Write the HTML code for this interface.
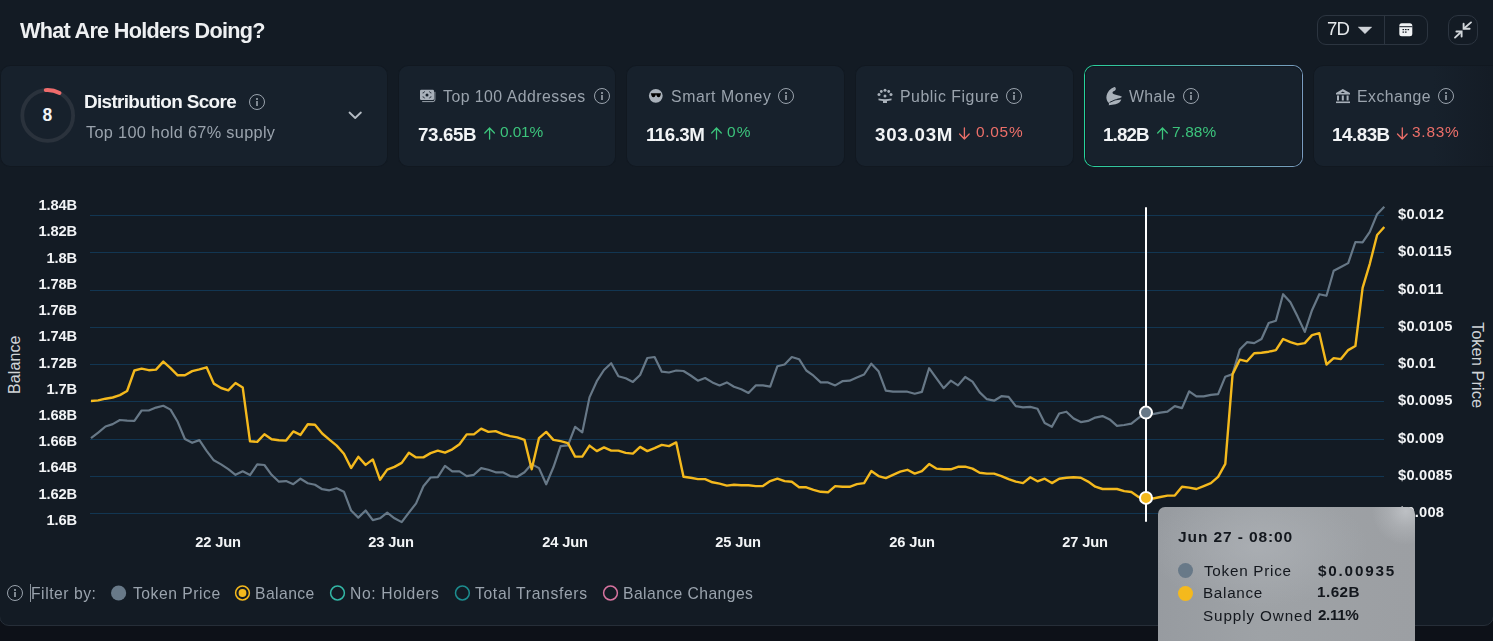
<!DOCTYPE html>
<html><head><meta charset="utf-8">
<style>
*{box-sizing:border-box;margin:0;padding:0}
html,body{width:1493px;height:641px;overflow:hidden;background:#0d1118;font-family:"Liberation Sans",sans-serif}
#wrap{position:absolute;left:-1px;top:-20px;width:1495px;height:646px;background:#131b24;border:1px solid #262e38;border-radius:10px}
.abs{position:absolute}
.tx{position:absolute;white-space:nowrap;line-height:normal;will-change:transform}
.card{position:absolute;top:65px;height:102px;background:#17212c;border-radius:10px;box-shadow:inset 0 0 0 1px #111820}
.info{position:absolute;width:16px;height:16px;border:1.2px solid #9aa3ad;border-radius:50%}
.info:before{content:"";position:absolute;left:6.4px;top:3.2px;width:1.2px;height:1.4px;background:#7f8891}
.info:after{content:"";position:absolute;left:6.4px;top:5.9px;width:1.2px;height:5.2px;background:#7f8891}
.rad{position:absolute;top:585.5px;width:15px;height:15px;border-radius:50%}
.tt{position:absolute;z-index:5;left:1158px;top:507px;width:257px;height:150px;border-radius:7px;background:radial-gradient(circle 34px at 248px 4px,rgba(200,203,207,0.75),rgba(200,203,207,0.3) 50%,rgba(200,203,207,0)),radial-gradient(ellipse 110px 60px at 100px 40px,rgba(172,176,181,0.8),rgba(172,176,181,0)),linear-gradient(90deg,#979ba0,#9ea2a6 40%,#9c9fa3)}
</style></head><body>
<div id="wrap"></div>

<!-- top controls -->
<div class="abs" style="left:1317px;top:15px;width:111px;height:30px;border:1px solid #2c3540;border-radius:9px"></div>
<div class="abs" style="left:1384px;top:15px;width:1px;height:30px;background:#2c3540"></div>
<svg class="abs" style="left:1357px;top:25px" width="16" height="10"><path d="M1.2 2 L14.8 2 L8 8.8 Z" fill="#cfd3d8" stroke="#cfd3d8" stroke-width="0.4" stroke-linejoin="round"/></svg>
<svg class="abs" style="left:1398px;top:22px" width="15" height="15"><rect x="1.3" y="1.3" width="13" height="13" rx="2.5" fill="#f0f2f4"/><rect x="1.3" y="4.2" width="13" height="1" fill="#131a23"/><g fill="#131a23"><rect x="4.5" y="7" width="1.6" height="1.2"/><rect x="7" y="7" width="1.6" height="1.2"/><rect x="9.5" y="7" width="1.6" height="1.2"/><rect x="4.5" y="9.5" width="1.6" height="1.2"/><rect x="7" y="9.5" width="1.6" height="1.2"/></g></svg>
<div class="abs" style="left:1448px;top:15px;width:30px;height:30px;border:1px solid #2c3540;border-radius:10px"></div>
<svg class="abs" style="left:1448px;top:15px" width="30" height="30"><g stroke="#d2d6da" stroke-width="1.9" fill="none" stroke-linecap="round"><path d="M23 7.4 L16.2 13.2"/><path d="M15.6 8.7 V13.7 H21.6"/><path d="M7 22.6 L13 17"/><path d="M8.4 16.5 H13.6 V21.6"/></g></svg>

<!-- card 1 -->
<div class="card" style="left:0;width:388px"></div>
<svg class="abs" style="left:20px;top:88px" width="56" height="56"><circle cx="27.7" cy="27.4" r="25.4" fill="none" stroke="#2a323c" stroke-width="3.8"/><path d="M 25.7 2.05 A 25.4 25.4 0 0 1 39.5 5" fill="none" stroke="#ef6b6b" stroke-width="3.8" stroke-linecap="round"/><text x="27.4" y="33.4" text-anchor="middle" font-family="Liberation Sans" font-weight="bold" font-size="17.5" fill="#f2f4f6">8</text></svg>
<div class="info" style="left:249px;top:94px"></div>
<svg class="abs" style="left:348px;top:111px" width="15" height="9"><path d="M1.5 1.5 L7.2 7 L12.9 1.5" stroke="#b5bcc4" stroke-width="1.8" fill="none" stroke-linecap="round" stroke-linejoin="round"/></svg>

<!-- card 2 -->
<div class="card" style="left:398px;width:218px"></div>
<svg class="abs" style="left:419px;top:88px" width="18" height="16"><rect x="1" y="1.8" width="14" height="10.2" rx="1.3" fill="#a9b1ba"/><g stroke="#17212c" stroke-width="0.9" fill="none" stroke-linecap="round"><path d="M5.5 3.8 Q5.3 4.9 4 5"/><path d="M10.5 3.8 Q10.7 4.9 12 5"/><path d="M4 8.8 Q5.3 8.9 5.5 10"/><path d="M12 8.8 Q10.7 8.9 10.5 10"/></g><circle cx="8" cy="6.9" r="1.5" fill="#17212c"/><path d="M15.9 3.8 V11.8 Q15.9 13.6 14.1 13.6 H3.2" stroke="#a9b1ba" stroke-width="0.9" fill="none"/></svg>
<div class="info" style="left:594px;top:88px"></div>

<!-- card 3 -->
<div class="card" style="left:626px;width:219px"></div>
<svg class="abs" style="left:648px;top:88px" width="16" height="16"><circle cx="7.8" cy="7.8" r="6.9" fill="#a9b1ba"/><path d="M2.8 5.2 H13 L12.3 8 Q11.8 9.2 10.4 9.2 Q9 9.2 8.5 7.6 L8 6.2 L7.5 7.6 Q7 9.2 5.6 9.2 Q4.2 9.2 3.6 8 Z" fill="#000"/></svg>
<div class="info" style="left:778px;top:88px"></div>

<!-- card 4 -->
<div class="card" style="left:855px;width:219px"></div>
<svg class="abs" style="left:876px;top:87px" width="18" height="18"><g fill="#a9b1ba"><circle cx="9" cy="3.2" r="1.5"/><circle cx="5.3" cy="4.5" r="1.4"/><circle cx="12.7" cy="4.5" r="1.4"/><circle cx="3" cy="7.6" r="1.5"/><circle cx="15" cy="7.6" r="1.5"/><circle cx="9" cy="9" r="1.5"/><path d="M2.5 11.5 Q9 13 15.5 11.5 L15.5 13.2 Q12.5 14 11 14 V16 H7 V14 Q5.5 14 2.5 13.2 Z"/></g></svg>
<div class="info" style="left:1006px;top:88px"></div>

<!-- card 5 -->
<div class="card" style="left:1084px;width:219px;border:1px solid transparent;background:linear-gradient(#17212c,#17212c) padding-box,linear-gradient(90deg,#27d49c,#3fb6a0 30%,#7a9cc0) border-box"></div>
<svg class="abs" style="left:1105px;top:86px" width="18" height="20"><path d="M9.4 1 C10.6 1.2 11.1 2.5 10.7 3.6 C10.3 4.6 9.2 5.2 8 5.6 L7.4 7 C8.5 8.6 11 8.8 13.5 9.4 C15.5 9.9 16.8 10.2 16.9 10.8 C16.5 11.9 14 12.4 11.5 12.6 C13.5 12.8 16 13 16.3 13.4 C15.8 15.5 13.5 17.5 10.5 18.2 C8.5 18.7 6 18.9 3.6 19.2 C4.2 18.2 4.2 17.5 3.6 16.8 C1.6 14.8 1 12 1.6 9.5 C2.3 6 5 2.8 9.4 1 Z" fill="#a9b1ba"/><path d="M4.6 16.4 Q9.5 13.2 16.6 12.9" stroke="#17212c" stroke-width="1" fill="none"/><path d="M7.8 4 Q9 3.2 9.6 2" stroke="#8d959e" stroke-width="0.6" fill="none"/></svg>
<div class="info" style="left:1183px;top:88px"></div>

<!-- card 6 -->
<div class="card" style="left:1313px;width:219px;background:linear-gradient(90deg,#17212c 0,#17212c 120px,#131a23 200px)"></div>
<svg class="abs" style="left:1335px;top:88px" width="16" height="16"><g fill="#a9b1ba"><path d="M7.8 1 L15 5 V6.4 H1 V5 Z"/><rect x="2" y="7.5" width="2" height="5"/><rect x="6.8" y="7.5" width="2" height="5"/><rect x="11.6" y="7.5" width="2" height="5"/><rect x="1" y="13.5" width="14" height="1.6"/></g><path d="M5.6 4.9 L7.8 3.6 L10 4.9 Z" fill="#17212c"/></svg>
<div class="info" style="left:1438px;top:88px"></div>

<!-- arrows -->
<svg class="abs" style="left:0;top:0" width="1493" height="160"><g stroke-width="1.3" fill="none" stroke-linecap="round" stroke-linejoin="round">
<path d="M489.6 139 V128 M484.8 133 L489.6 128 L494.4 133" stroke="#3cc47c"/>
<path d="M716.5 139 V128 M711.7 133 L716.5 128 L721.3 133" stroke="#3cc47c"/>
<path d="M964.4 128 V139 M959.6 134 L964.4 139 L969.2 134" stroke="#ec6f69"/>
<path d="M1162.5 139 V128 M1157.7 133 L1162.5 128 L1167.3 133" stroke="#3cc47c"/>
<path d="M1402.3 128 V139 M1397.5 134 L1402.3 139 L1407.1 134" stroke="#ec6f69"/>
</g></svg>

<!-- chart -->
<svg class="abs" style="left:0;top:0" width="1493" height="641">
<g stroke="#123652" stroke-width="1"><line x1="90" y1="215.5" x2="1384" y2="215.5"/><line x1="90" y1="252.5" x2="1384" y2="252.5"/><line x1="90" y1="290.5" x2="1384" y2="290.5"/><line x1="90" y1="327.5" x2="1384" y2="327.5"/><line x1="90" y1="364.5" x2="1384" y2="364.5"/><line x1="90" y1="401.5" x2="1384" y2="401.5"/><line x1="90" y1="439.5" x2="1384" y2="439.5"/><line x1="90" y1="476.5" x2="1384" y2="476.5"/><line x1="90" y1="513.5" x2="1384" y2="513.5"/></g>
<text x="19.8" y="364.7" transform="rotate(-90 19.8 364.7)" text-anchor="middle" style="font-size:16px;letter-spacing:0.1px;font-family:'Liberation Sans';fill:#d0d4d8">Balance</text>
<text x="1471.6" y="365" transform="rotate(90 1471.6 365)" text-anchor="middle" style="font-size:16.5px;letter-spacing:0px;font-family:'Liberation Sans';fill:#d0d4d8">Token Price</text>
<polyline points="91.0,438.1 98.2,432.7 105.5,426.5 112.7,424.1 119.9,420.0 127.1,420.6 134.4,420.9 141.6,410.5 148.8,410.5 156.0,407.6 163.3,405.8 170.5,409.6 177.7,421.8 184.9,439.0 192.2,442.8 199.4,440.1 206.6,450.8 213.8,460.3 221.1,464.4 228.3,469.2 235.5,474.8 242.7,471.3 250.0,475.1 257.2,464.4 264.4,465.0 271.6,474.8 278.9,481.7 286.1,481.1 293.3,484.2 300.5,478.7 307.8,483.2 315.0,484.8 322.2,489.2 329.4,490.3 336.7,488.2 343.9,491.7 351.1,510.5 358.3,517.6 365.6,510.5 372.8,520.1 380.0,518.3 387.2,512.6 394.5,518.3 401.7,522.1 408.9,512.6 416.1,503.4 423.4,486.2 430.6,477.5 437.8,477.1 445.0,465.9 452.3,471.4 459.5,471.4 466.7,476.1 473.9,474.8 481.2,468.1 488.4,469.8 495.6,472.3 502.8,472.3 510.1,476.1 517.3,476.8 524.5,472.3 531.7,464.1 539.0,468.1 546.2,484.3 553.4,467.3 560.6,446.1 567.9,445.4 575.1,426.9 582.3,432.4 589.5,397.4 596.8,381.2 604.0,370.0 611.2,363.2 618.4,376.2 625.7,378.2 632.9,381.9 640.1,375.0 647.3,358.0 654.6,357.0 661.8,371.7 669.0,372.5 676.2,370.5 683.5,371.0 690.7,375.5 697.9,380.7 705.1,378.0 712.4,382.4 719.6,385.4 726.8,382.4 734.0,386.7 741.3,389.2 748.5,392.9 755.7,385.4 762.9,385.4 770.2,386.7 777.4,366.2 784.6,364.5 791.8,357.0 799.1,359.2 806.3,370.5 813.5,375.7 820.7,382.4 828.0,382.4 835.2,385.4 842.4,381.2 849.6,380.7 856.9,377.5 864.1,374.5 871.3,363.7 878.5,371.2 885.8,390.7 893.0,391.7 900.2,391.7 907.4,391.7 914.7,393.7 921.9,391.9 929.1,368.2 936.3,378.2 943.6,388.2 950.8,380.7 958.0,385.4 965.2,377.0 972.5,381.7 979.7,392.4 986.9,399.2 994.1,400.7 1001.4,396.2 1008.6,396.9 1015.8,406.2 1023.0,407.4 1030.3,406.9 1037.5,408.7 1044.7,423.0 1051.9,426.8 1059.2,413.5 1066.4,411.7 1073.6,418.5 1080.8,422.1 1088.1,420.9 1095.3,417.6 1102.5,416.1 1109.7,419.4 1117.0,425.9 1124.2,425.0 1131.4,423.6 1138.6,417.9 1145.9,412.6 1153.1,414.1 1160.3,412.6 1167.5,411.7 1174.8,406.1 1182.0,408.1 1189.2,391.3 1196.4,396.3 1203.7,396.3 1210.9,394.8 1218.1,394.2 1225.3,376.7 1232.6,374.1 1239.8,349.5 1247.0,342.2 1254.2,343.1 1261.5,339.0 1268.7,323.0 1275.9,320.7 1283.1,294.2 1290.4,302.2 1297.6,316.6 1304.8,331.9 1312.0,310.2 1319.3,294.2 1326.5,295.8 1333.7,270.8 1340.9,267.0 1348.2,263.1 1355.4,242.0 1362.6,242.3 1369.8,231.8 1377.1,214.2 1384.3,206.8" fill="none" stroke="#677887" stroke-width="2.2" stroke-linejoin="round"/>
<polyline points="91.0,401.0 98.2,400.4 105.5,398.7 112.7,397.5 119.9,395.1 127.1,391.0 134.4,370.5 141.6,368.7 148.8,370.2 156.0,369.6 163.3,361.6 170.5,368.1 177.7,375.3 184.9,375.3 192.2,371.1 199.4,369.3 206.6,367.3 213.8,383.6 221.1,388.0 228.3,390.4 235.5,383.0 242.7,387.4 250.0,441.3 257.2,441.9 264.4,434.2 271.6,439.3 278.9,440.2 286.1,440.6 293.3,431.4 300.5,434.9 307.8,424.3 315.0,424.7 322.2,433.5 329.4,439.6 336.7,445.6 343.9,453.8 351.1,468.0 358.3,456.8 365.6,464.9 372.8,459.4 380.0,479.7 387.2,469.6 394.5,466.9 401.7,462.9 408.9,452.7 416.1,457.4 423.4,457.4 430.6,453.1 437.8,450.7 445.0,452.7 452.3,449.3 459.5,444.2 466.7,434.4 473.9,434.4 481.2,428.6 488.4,431.9 495.6,431.1 502.8,434.1 510.1,436.1 517.3,437.4 524.5,439.9 531.7,469.3 539.0,438.1 546.2,431.9 553.4,439.9 560.6,441.1 567.9,443.1 575.1,456.6 582.3,456.6 589.5,445.6 596.8,451.1 604.0,447.4 611.2,450.6 618.4,450.6 625.7,452.9 632.9,453.6 640.1,446.9 647.3,451.1 654.6,448.1 661.8,444.9 669.0,446.1 676.2,442.4 683.5,476.8 690.7,477.8 697.9,479.1 705.1,479.1 712.4,482.3 719.6,483.6 726.8,485.6 734.0,484.8 741.3,485.3 748.5,485.3 755.7,486.1 762.9,486.1 770.2,481.1 777.4,478.6 784.6,481.1 791.8,481.8 799.1,487.3 806.3,487.3 813.5,489.8 820.7,491.8 828.0,492.3 835.2,486.1 842.4,486.8 849.6,486.8 856.9,484.1 864.1,483.1 871.3,471.1 878.5,476.1 885.8,478.1 893.0,474.8 900.2,471.6 907.4,469.8 914.7,473.6 921.9,471.1 929.1,464.1 936.3,468.6 943.6,469.3 950.8,469.3 958.0,466.8 965.2,466.6 972.5,468.6 979.7,472.8 986.9,473.6 994.1,473.6 1001.4,476.1 1008.6,479.1 1015.8,481.6 1023.0,483.1 1030.3,477.3 1037.5,481.3 1044.7,478.7 1051.9,483.1 1059.2,478.7 1066.4,477.8 1073.6,477.2 1080.8,477.8 1088.1,481.6 1095.3,486.7 1102.5,489.0 1109.7,489.0 1117.0,489.0 1124.2,491.1 1131.4,492.0 1138.6,497.0 1145.9,497.9 1153.1,498.5 1160.3,497.0 1167.5,495.6 1174.8,495.6 1182.0,486.7 1189.2,487.6 1196.4,489.0 1203.7,486.1 1210.9,483.1 1218.1,476.9 1225.3,463.9 1232.6,374.1 1239.8,359.7 1247.0,361.3 1254.2,353.3 1261.5,352.7 1268.7,351.7 1275.9,350.1 1283.1,339.0 1290.4,342.2 1297.6,344.4 1304.8,343.1 1312.0,335.1 1319.3,333.2 1326.5,364.5 1333.7,358.1 1340.9,359.1 1348.2,350.1 1355.4,346.0 1362.6,287.8 1369.8,263.8 1377.1,235.0 1384.3,227.0" fill="none" stroke="#f4b91d" stroke-width="2.4" stroke-linejoin="round"/>
<line x1="1146" y1="208" x2="1146" y2="521" stroke="#ffffff" stroke-width="2" stroke-linecap="round"/>
<circle cx="1146" cy="412.6" r="6" fill="#677887" stroke="#fff" stroke-width="2"/>
<circle cx="1146" cy="497.9" r="6" fill="#f4b91d" stroke="#fff" stroke-width="2"/>
</svg>

<!-- filter row -->
<div class="info" style="left:7px;top:585px"></div>
<div class="abs" style="left:30px;top:584px;width:1px;height:18px;background:#8a939c"></div>
<svg class="abs" style="left:0;top:570px" width="700" height="50">
<circle cx="118.6" cy="23" r="7.6" fill="#687988"/>
<circle cx="242.5" cy="23" r="6.9" fill="none" stroke="#f4b91d" stroke-width="1.5"/><circle cx="242.5" cy="23" r="3.9" fill="#f4b91d"/>
<circle cx="337.5" cy="23" r="6.9" fill="none" stroke="#33b7a6" stroke-width="1.5"/>
<circle cx="462.4" cy="23" r="6.9" fill="none" stroke="#1d8d8f" stroke-width="1.5"/>
<circle cx="610.5" cy="23" r="6.9" fill="none" stroke="#d7739f" stroke-width="1.5"/>
</svg>
<!-- tooltip -->
<div class="tt">
<div style="position:absolute;left:20px;top:56px;width:15px;height:15px;border-radius:50%;background:#687988"></div>
<div style="position:absolute;left:20px;top:79px;width:15px;height:15px;border-radius:50%;background:#f4b91d"></div>
</div>
<div id="title" class="tx" style="top:17.95px;font-size:21.66px;letter-spacing:-0.727px;color:#eef0f2;font-weight:bold;left:20.00px;">What Are Holders Doing?</div>
<div id="dist" class="tx" style="top:90.60px;font-size:18.90px;letter-spacing:-0.653px;color:#f2f4f6;font-weight:bold;left:84.00px;">Distribution Score</div>
<div id="hold" class="tx" style="top:123.21px;font-size:16.28px;letter-spacing:0.327px;color:#9aa3ad;left:86.00px;">Top 100 hold 67% supply</div>
<div id="seven" class="tx" style="top:17.87px;font-size:18.60px;letter-spacing:-0.900px;color:#e6e9ec;left:1327.30px;">7D</div>
<div id="l2" class="tx" style="top:88.31px;font-size:15.84px;letter-spacing:0.475px;color:#9aa3ad;left:443.00px;">Top 100 Addresses</div>
<div id="v2" class="tx" style="top:123.63px;font-size:18.75px;letter-spacing:-0.360px;color:#f2f4f6;font-weight:bold;left:418.00px;">73.65B</div>
<div id="c2" class="tx" style="top:123.41px;font-size:15.41px;letter-spacing:-0.100px;color:#3cc47c;left:500.00px;">0.01%</div>
<div id="l3" class="tx" style="top:88.31px;font-size:15.84px;letter-spacing:0.570px;color:#9aa3ad;left:671.00px;">Smart Money</div>
<div id="v3" class="tx" style="top:123.63px;font-size:18.75px;letter-spacing:-0.540px;color:#f2f4f6;font-weight:bold;left:646.00px;">116.3M</div>
<div id="c3" class="tx" style="top:123.41px;font-size:15.41px;letter-spacing:1.200px;color:#3cc47c;left:727.00px;">0%</div>
<div id="l4" class="tx" style="top:88.31px;font-size:15.84px;letter-spacing:0.542px;color:#9aa3ad;left:900.00px;">Public Figure</div>
<div id="v4" class="tx" style="top:123.63px;font-size:18.75px;letter-spacing:0.750px;color:#f2f4f6;font-weight:bold;left:875.00px;">303.03M</div>
<div id="c4" class="tx" style="top:123.41px;font-size:15.41px;letter-spacing:0.725px;color:#ec6f69;left:976.00px;">0.05%</div>
<div id="l5" class="tx" style="top:88.31px;font-size:15.84px;letter-spacing:0.375px;color:#9aa3ad;left:1129.00px;">Whale</div>
<div id="v5" class="tx" style="top:123.63px;font-size:18.75px;letter-spacing:-0.850px;color:#f2f4f6;font-weight:bold;left:1103.00px;">1.82B</div>
<div id="c5" class="tx" style="top:123.41px;font-size:15.41px;letter-spacing:0.150px;color:#3cc47c;left:1172.00px;">7.88%</div>
<div id="l6" class="tx" style="top:88.31px;font-size:15.84px;letter-spacing:0.457px;color:#9aa3ad;left:1357.00px;">Exchange</div>
<div id="v6" class="tx" style="top:123.63px;font-size:18.75px;letter-spacing:-0.460px;color:#f2f4f6;font-weight:bold;left:1332.00px;">14.83B</div>
<div id="c6" class="tx" style="top:123.41px;font-size:15.41px;letter-spacing:0.775px;color:#ec6f69;left:1412.00px;">3.83%</div>
<div id="f0" class="tx" style="top:585.34px;font-size:15.70px;letter-spacing:0.533px;color:#9aa3ad;left:31.00px;">Filter by:</div>
<div id="f1" class="tx" style="top:585.34px;font-size:15.70px;letter-spacing:0.520px;color:#9aa3ad;left:133.00px;">Token Price</div>
<div id="f2" class="tx" style="top:585.34px;font-size:15.70px;letter-spacing:0.433px;color:#9aa3ad;left:255.00px;">Balance</div>
<div id="f3" class="tx" style="top:585.34px;font-size:15.70px;letter-spacing:0.610px;color:#9aa3ad;left:350.00px;">No: Holders</div>
<div id="f4" class="tx" style="top:585.34px;font-size:15.70px;letter-spacing:0.650px;color:#9aa3ad;left:475.00px;">Total Transfers</div>
<div id="f5" class="tx" style="top:585.34px;font-size:15.70px;letter-spacing:0.436px;color:#9aa3ad;left:623.00px;">Balance Changes</div>
<div id="t0" class="tx" style="top:528.38px;font-size:15.55px;letter-spacing:0.877px;color:#13171d;font-weight:bold;left:1178.00px;z-index:6;">Jun 27 - 08:00</div>
<div id="t1" class="tx" style="top:562.44px;font-size:15.26px;letter-spacing:0.740px;color:#13171d;left:1204.00px;z-index:6;">Token Price</div>
<div id="t2" class="tx" style="top:562.44px;font-size:15.26px;letter-spacing:1.800px;color:#13171d;font-weight:bold;left:1318.00px;z-index:6;">$0.00935</div>
<div id="t3" class="tx" style="top:584.44px;font-size:15.26px;letter-spacing:0.700px;color:#13171d;left:1203.00px;z-index:6;">Balance</div>
<div id="t4" class="tx" style="top:583.44px;font-size:15.26px;letter-spacing:0.475px;color:#13171d;font-weight:bold;left:1317.00px;z-index:6;">1.62B</div>
<div id="t5" class="tx" style="top:607.44px;font-size:15.26px;letter-spacing:0.882px;color:#13171d;left:1203.00px;z-index:6;">Supply Owned</div>
<div id="t6" class="tx" style="top:606.44px;font-size:15.26px;letter-spacing:-0.375px;color:#13171d;font-weight:bold;left:1318.00px;z-index:6;">2.11%</div>
<div id="yl0" class="tx" style="top:197.08px;font-size:14.68px;letter-spacing:-0.150px;color:#f2f4f6;font-weight:bold;left:-223.00px;width:300px;text-align:right;">1.84B</div>
<div id="yl1" class="tx" style="top:223.32px;font-size:14.68px;letter-spacing:-0.150px;color:#f2f4f6;font-weight:bold;left:-223.00px;width:300px;text-align:right;">1.82B</div>
<div id="yl2" class="tx" style="top:249.56px;font-size:14.68px;letter-spacing:-0.150px;color:#f2f4f6;font-weight:bold;left:-223.00px;width:300px;text-align:right;">1.8B</div>
<div id="yl3" class="tx" style="top:275.80px;font-size:14.68px;letter-spacing:-0.150px;color:#f2f4f6;font-weight:bold;left:-223.00px;width:300px;text-align:right;">1.78B</div>
<div id="yl4" class="tx" style="top:302.04px;font-size:14.68px;letter-spacing:-0.150px;color:#f2f4f6;font-weight:bold;left:-223.00px;width:300px;text-align:right;">1.76B</div>
<div id="yl5" class="tx" style="top:328.28px;font-size:14.68px;letter-spacing:-0.150px;color:#f2f4f6;font-weight:bold;left:-223.00px;width:300px;text-align:right;">1.74B</div>
<div id="yl6" class="tx" style="top:354.52px;font-size:14.68px;letter-spacing:-0.150px;color:#f2f4f6;font-weight:bold;left:-223.00px;width:300px;text-align:right;">1.72B</div>
<div id="yl7" class="tx" style="top:380.76px;font-size:14.68px;letter-spacing:-0.150px;color:#f2f4f6;font-weight:bold;left:-223.00px;width:300px;text-align:right;">1.7B</div>
<div id="yl8" class="tx" style="top:407.00px;font-size:14.68px;letter-spacing:-0.150px;color:#f2f4f6;font-weight:bold;left:-223.00px;width:300px;text-align:right;">1.68B</div>
<div id="yl9" class="tx" style="top:433.24px;font-size:14.68px;letter-spacing:-0.150px;color:#f2f4f6;font-weight:bold;left:-223.00px;width:300px;text-align:right;">1.66B</div>
<div id="yl10" class="tx" style="top:459.48px;font-size:14.68px;letter-spacing:-0.150px;color:#f2f4f6;font-weight:bold;left:-223.00px;width:300px;text-align:right;">1.64B</div>
<div id="yl11" class="tx" style="top:485.72px;font-size:14.68px;letter-spacing:-0.150px;color:#f2f4f6;font-weight:bold;left:-223.00px;width:300px;text-align:right;">1.62B</div>
<div id="yl12" class="tx" style="top:511.96px;font-size:14.68px;letter-spacing:-0.150px;color:#f2f4f6;font-weight:bold;left:-223.00px;width:300px;text-align:right;">1.6B</div>
<div id="yr0" class="tx" style="top:206.03px;font-size:14.68px;letter-spacing:0.220px;color:#f2f4f6;font-weight:bold;left:1398.00px;">$0.012</div>
<div id="yr1" class="tx" style="top:243.31px;font-size:14.68px;letter-spacing:0.220px;color:#f2f4f6;font-weight:bold;left:1398.00px;">$0.0115</div>
<div id="yr2" class="tx" style="top:280.59px;font-size:14.68px;letter-spacing:0.220px;color:#f2f4f6;font-weight:bold;left:1398.00px;">$0.011</div>
<div id="yr3" class="tx" style="top:317.87px;font-size:14.68px;letter-spacing:0.220px;color:#f2f4f6;font-weight:bold;left:1398.00px;">$0.0105</div>
<div id="yr4" class="tx" style="top:355.15px;font-size:14.68px;letter-spacing:0.220px;color:#f2f4f6;font-weight:bold;left:1398.00px;">$0.01</div>
<div id="yr5" class="tx" style="top:392.43px;font-size:14.68px;letter-spacing:0.220px;color:#f2f4f6;font-weight:bold;left:1398.00px;">$0.0095</div>
<div id="yr6" class="tx" style="top:429.71px;font-size:14.68px;letter-spacing:0.220px;color:#f2f4f6;font-weight:bold;left:1398.00px;">$0.009</div>
<div id="yr7" class="tx" style="top:466.99px;font-size:14.68px;letter-spacing:0.220px;color:#f2f4f6;font-weight:bold;left:1398.00px;">$0.0085</div>
<div id="yr8" class="tx" style="top:504.27px;font-size:14.68px;letter-spacing:0.220px;color:#f2f4f6;font-weight:bold;left:1398.00px;">$0.008</div>
<div id="xd0" class="tx" style="top:533.58px;font-size:14.68px;letter-spacing:-0.160px;color:#f2f4f6;font-weight:bold;left:68.00px;width:300px;text-align:center;">22 Jun</div>
<div id="xd1" class="tx" style="top:533.58px;font-size:14.68px;letter-spacing:-0.160px;color:#f2f4f6;font-weight:bold;left:241.38px;width:300px;text-align:center;">23 Jun</div>
<div id="xd2" class="tx" style="top:533.58px;font-size:14.68px;letter-spacing:-0.160px;color:#f2f4f6;font-weight:bold;left:414.76px;width:300px;text-align:center;">24 Jun</div>
<div id="xd3" class="tx" style="top:533.58px;font-size:14.68px;letter-spacing:-0.160px;color:#f2f4f6;font-weight:bold;left:588.14px;width:300px;text-align:center;">25 Jun</div>
<div id="xd4" class="tx" style="top:533.58px;font-size:14.68px;letter-spacing:-0.160px;color:#f2f4f6;font-weight:bold;left:761.52px;width:300px;text-align:center;">26 Jun</div>
<div id="xd5" class="tx" style="top:533.58px;font-size:14.68px;letter-spacing:-0.160px;color:#f2f4f6;font-weight:bold;left:934.90px;width:300px;text-align:center;">27 Jun</div>
</body></html>
